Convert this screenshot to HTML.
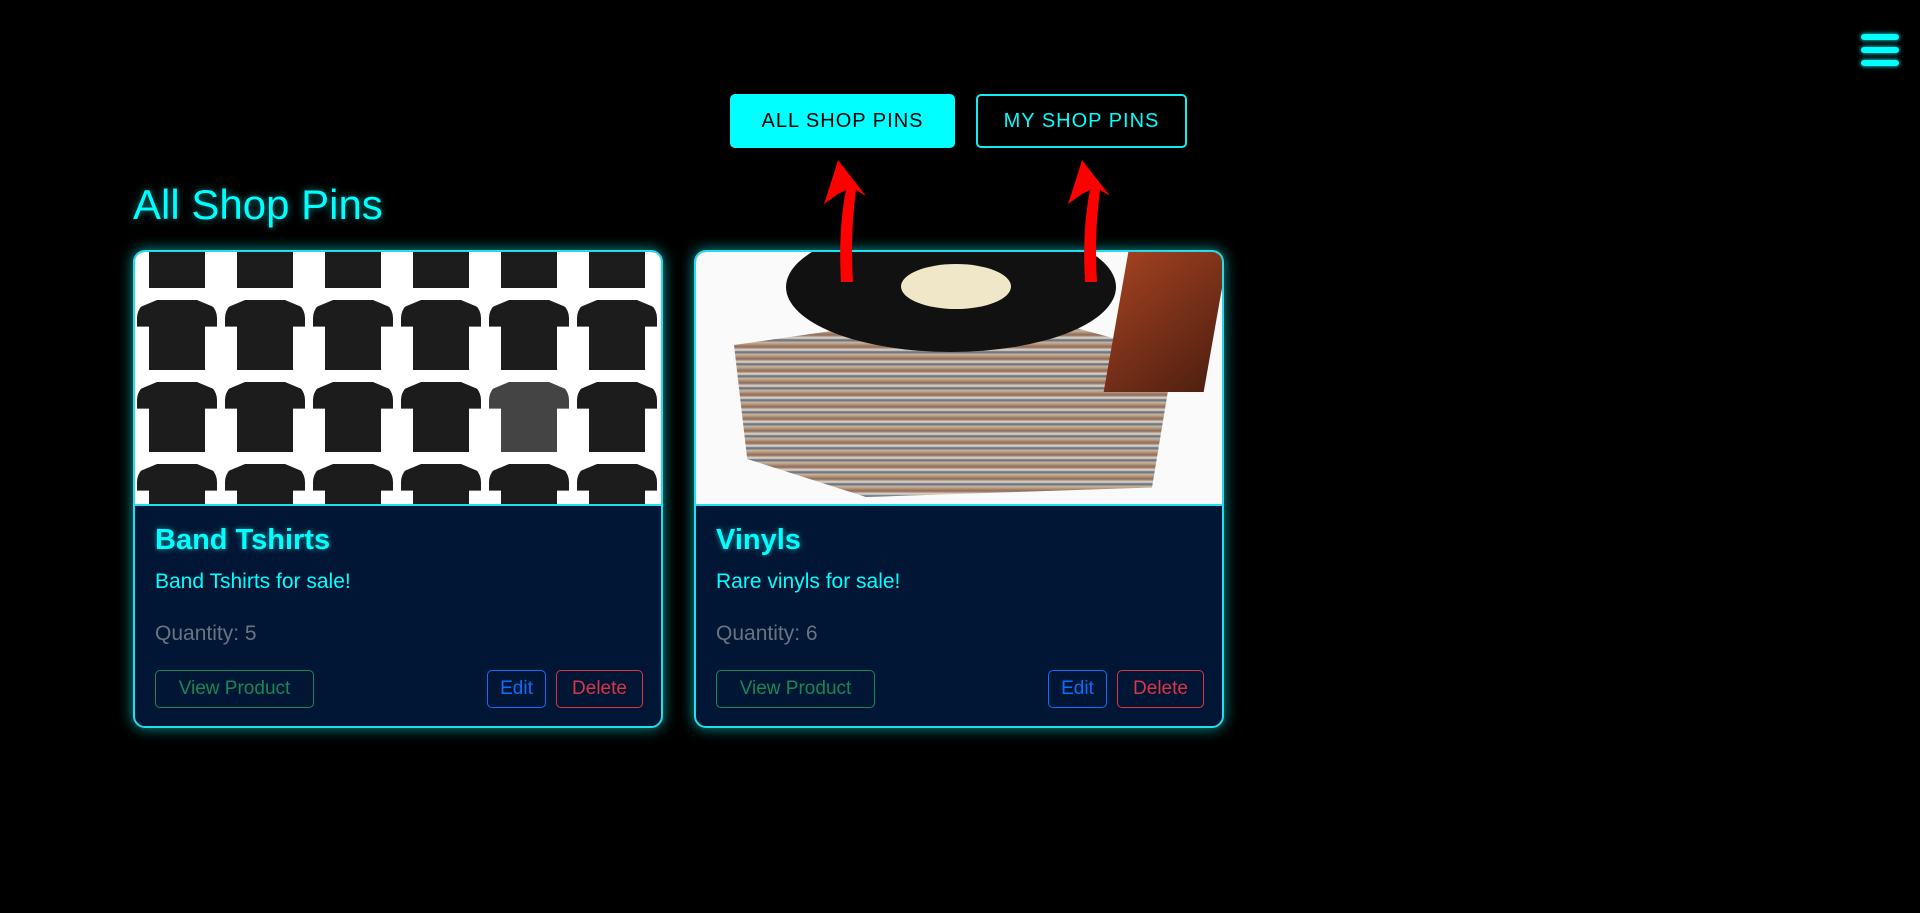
<!DOCTYPE html>
<html><head><style>
body{margin:0;width:1920px;height:913px;background:#000;font-family:"Liberation Sans",sans-serif;position:relative;overflow:hidden}
.btn{position:absolute;top:94px;height:54px;border-radius:5px;box-sizing:border-box;display:flex;align-items:center;justify-content:center;font-size:20px;letter-spacing:1px}
h1{position:absolute;left:133px;top:181px;margin:0;font-weight:normal;font-size:42px;color:#0ff;text-shadow:0 0 8px #0ff8}
.card{position:absolute;top:250px;width:530px;height:478px;border:2px solid #2de;border-radius:12px;box-sizing:border-box;background:#001634;box-shadow:0 0 14px #0ff9;overflow:hidden}
.img{height:252px;border-bottom:2px solid #2de;position:relative;overflow:hidden}
.t{position:absolute;left:20px;top:272px;font-size:29px;font-weight:bold;color:#0ff;text-shadow:0 0 6px #0ff8}
.s{position:absolute;left:20px;top:318px;font-size:21px;color:#0ff}
.q{position:absolute;left:20px;top:370px;font-size:21px;color:#6b7380}
.b{position:absolute;top:418px;height:38px;border:1.5px solid;border-radius:5px;box-sizing:border-box;font-size:19px;display:flex;align-items:center;justify-content:center}
.grid{position:absolute;left:-2px;top:-42px;display:grid;grid-template-columns:repeat(6,88px);grid-auto-rows:82px}
.sh{margin:8px 4px 4px;background:#1c1c1c;border-radius:18px 18px 4px 4px;clip-path:polygon(0 12%,25% 0,75% 0,100% 12%,100% 38%,85% 38%,85% 100%,15% 100%,15% 38%,0 38%)}
</style></head><body>
<div style="position:absolute;left:1861px;top:34px;width:38px">
<div style="height:6px;background:#0ff;border-radius:3px;box-shadow:0 0 5px #0ff"></div>
<div style="height:6px;background:#0ff;border-radius:3px;margin-top:7px;box-shadow:0 0 5px #0ff"></div>
<div style="height:6px;background:#0ff;border-radius:3px;margin-top:7px;box-shadow:0 0 5px #0ff"></div></div>
<div class="btn" style="left:730px;width:225px;background:#0ff;color:#000">ALL SHOP PINS</div>
<div class="btn" style="left:976px;width:211px;border:2px solid #1ee;color:#0ff">MY SHOP PINS</div>
<h1>All Shop Pins</h1>
<div class="card" style="left:133px"><div class="img" style="background:#fff">
<div class="grid">
<div class="sh"></div><div class="sh"></div><div class="sh"></div><div class="sh"></div><div class="sh"></div><div class="sh"></div>
<div class="sh"></div><div class="sh"></div><div class="sh"></div><div class="sh"></div><div class="sh"></div><div class="sh"></div>
<div class="sh"></div><div class="sh"></div><div class="sh"></div><div class="sh"></div><div class="sh" style="background:#444"></div><div class="sh"></div>
<div class="sh"></div><div class="sh"></div><div class="sh"></div><div class="sh"></div><div class="sh"></div><div class="sh"></div>
</div></div>
<div class="t">Band Tshirts</div><div class="s">Band Tshirts for sale!</div><div class="q">Quantity: 5</div>
<div class="b" style="left:20px;width:159px;color:#198754;border-color:#198754">View Product</div>
<div class="b" style="left:352px;width:59px;color:#0d6efd;border-color:#0d6efd">Edit</div>
<div class="b" style="left:421px;width:87px;color:#dc3545;border-color:#dc3545">Delete</div></div>
<div class="card" style="left:694px"><div class="img" style="background:#fafafa">
<div style="position:absolute;left:38px;top:55px;width:440px;height:190px;background:repeating-linear-gradient(#c9a98a 0,#8a6a5a 4px,#e8dccb 7px,#5a6a80 9px,#d8c0a0 12px);clip-path:polygon(0 20%,60% 0,100% 25%,95% 95%,30% 100%,3% 80%)"></div>
<div style="position:absolute;left:90px;top:-30px;width:330px;height:130px;border-radius:50%;background:#111"></div>
<div style="position:absolute;left:205px;top:12px;width:110px;height:45px;border-radius:50%;background:#f0e6c8"></div>
<div style="position:absolute;left:420px;top:0;width:100px;height:140px;background:linear-gradient(135deg,#a04020,#502010);transform:skewX(-10deg)"></div></div>
<div class="t">Vinyls</div><div class="s">Rare vinyls for sale!</div><div class="q">Quantity: 6</div>
<div class="b" style="left:20px;width:159px;color:#198754;border-color:#198754">View Product</div>
<div class="b" style="left:352px;width:59px;color:#0d6efd;border-color:#0d6efd">Edit</div>
<div class="b" style="left:421px;width:87px;color:#dc3545;border-color:#dc3545">Delete</div></div>
<svg style="position:absolute;left:0;top:0" width="1920" height="913">
<g fill="red"><path d="M841 282 Q838 230 846 190 L838 194 L824 204 Q832 180 838 160 L866 196 L856 190 Q850 235 853 282Z"/>
<path d="M1085 282 Q1082 230 1090 190 L1082 194 L1068 204 Q1076 180 1082 160 L1110 196 L1100 190 Q1094 235 1097 282Z"/></g></svg>
</body></html>
